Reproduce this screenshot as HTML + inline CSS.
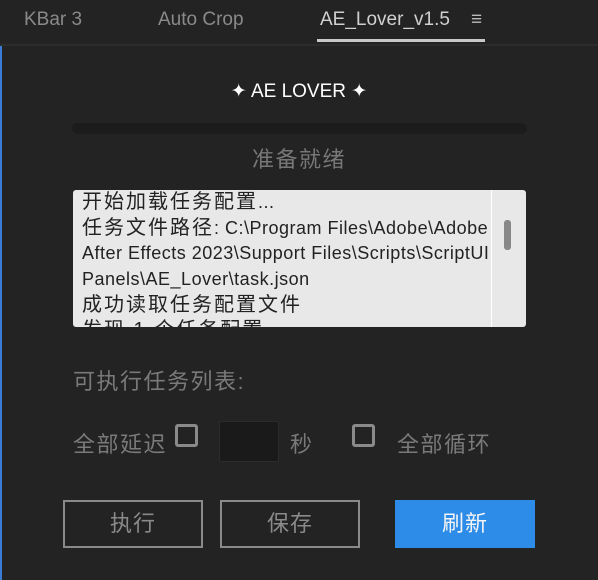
<!DOCTYPE html>
<html><head><meta charset="utf-8"><style>
*{margin:0;padding:0;box-sizing:border-box}
body{width:598px;height:580px;background:#232323;position:relative;overflow:hidden;font-family:"Liberation Sans","Noto Sans CJK SC",sans-serif}
.a{position:absolute;white-space:nowrap}
.tabs{position:absolute;left:0;top:0;width:598px;height:46px;background:#232323;border-bottom:2px solid #2c2c2c}
.tab{position:absolute;top:9px;font-size:19px;color:#8a8a8a}
.cb{position:absolute;width:23px;height:23px;border:3px solid #8a8a8a;border-radius:3px}
.btn{position:absolute;top:500px;height:48px;width:140px;border:2px solid #8a8a8a;color:#8a8a8a;font-size:22px;text-align:center;line-height:44px;letter-spacing:1px}
.log{position:absolute;left:73px;top:190px;width:453px;height:137px;background:#e8e8e8;border-radius:3px;overflow:hidden}
.log div{font-size:18px;color:#222;line-height:25.7px;height:25.7px;padding-left:9px;white-space:nowrap;letter-spacing:0.5px}
.c{font-size:20px;letter-spacing:2px}
.t{font-size:22px;color:#7a7a7a;letter-spacing:1.5px}
</style></head><body>
<div style="position:absolute;left:0;top:0;width:2px;height:580px;background:#3a7bd5"></div>
<div class="tabs"></div>
<div class="tab" style="left:24px">KBar 3</div>
<div class="tab" style="left:158px">Auto Crop</div>
<div class="tab" style="left:320px;color:#d0d0d0">AE_Lover_v1.5</div>
<div class="tab" style="left:471px;color:#bbb">≡</div>
<div class="a" style="left:317px;top:39px;width:168px;height:3px;background:#c8c8c8"></div>
<div class="a" style="left:0;top:80px;width:598px;text-align:center;font-size:19px;color:#fff">✦ AE LOVER ✦</div>
<div class="a" style="left:72px;top:123px;width:455px;height:11px;background:#1c1c1c;border-radius:6px"></div>
<div class="a t" style="left:0;top:142px;width:598px;text-align:center;color:#777">准备就绪</div>
<div class="log">
<div><span class="c">开始加载任务配置</span>...</div>
<div><span class="c">任务文件路径</span>: C:\Program Files\Adobe\Adobe</div>
<div>After Effects 2023\Support Files\Scripts\ScriptUI</div>
<div>Panels\AE_Lover\task.json</div>
<div><span class="c">成功读取任务配置文件</span></div>
<div><span class="c">发现 1 个任务配置</span></div>
<div style="position:absolute;left:418px;top:0;width:1px;height:137px;background:#fff;padding:0"></div>
<div style="position:absolute;left:431px;top:30px;width:7px;height:30px;background:#888;border-radius:3px;padding:0"></div>
</div>
<div class="a t" style="left:73px;top:364px">可执行任务列表:</div>
<div class="a t" style="left:73px;top:427px">全部延迟</div>
<div class="cb" style="left:175px;top:424px"></div>
<div class="a" style="left:219px;top:421px;width:60px;height:41px;background:#1a1a1a;border:1px solid #2c2c2c;border-radius:2px"></div>
<div class="a t" style="left:290px;top:427px">秒</div>
<div class="cb" style="left:352px;top:424px"></div>
<div class="a t" style="left:397px;top:427px">全部循环</div>
<div class="btn" style="left:63px">执行</div>
<div class="btn" style="left:220px">保存</div>
<div class="btn" style="left:395px;border:none;background:#2d8ce8;color:#f4f4f4;line-height:48px">刷新</div>
</body></html>
